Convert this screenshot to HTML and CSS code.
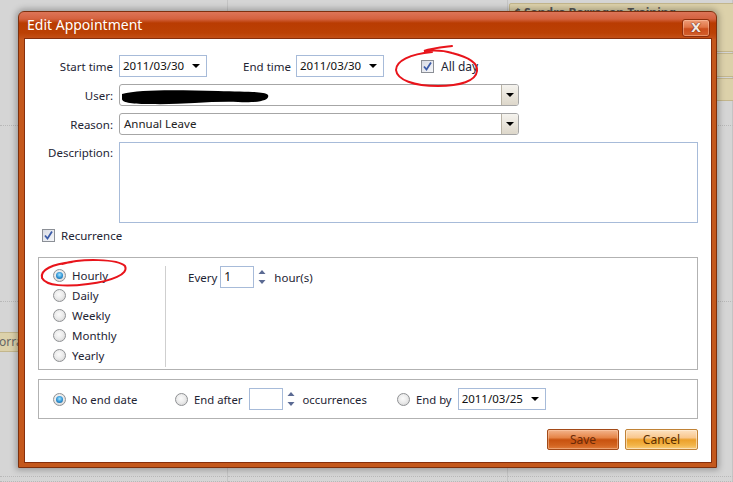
FILE: index.html
```html
<html>
<head>
    <meta charset="UTF-8">
    <title>Edit Appointment</title>
    <link rel="stylesheet" href="styles.css">
</head>
<body>
<!-- calendar behind the dialog -->
<div class="calendar">
    <div class="cell"></div><div class="cell"></div><div class="cell"></div>
    <div class="cell"></div><div class="cell"></div><div class="cell"></div>
    <div class="cell"></div><div class="cell"></div><div class="cell"></div>
    <div class="cell"></div><div class="cell"></div><div class="cell"></div>
</div>
<div class="appt appt-sandra">&#162; Sandra Barragan Training</div>
<div class="appt appt-b"></div>
<div class="appt appt-c"></div>
<div class="appt appt-left">orra</div>

<div class="dialog">
    <div class="dialog-title">
        <span class="title-text">Edit Appointment</span>
        <span class="close-btn">X</span>
    </div>
    <div class="dialog-body">
        <div class="form-grid">
            <span class="field-label">Start time</span>
            <div class="time-row">
                <div class="date-box">2011/03/30<span class="caret"></span></div>
                <span class="end-label">End time</span>
                <div class="date-box">2011/03/30<span class="caret"></span></div>
                <label class="check-label allday">
                    <span class="check"><svg width="11" height="11" viewBox="0 0 11 11"><path d="M2 5.5 L4.5 8.5 L9 1.5" fill="none" stroke="#3b5ba8" stroke-width="1.8"/></svg></span>
                    All day
                </label>
            </div>

            <span class="field-label">User:</span>
            <div class="combo">
                <div class="combo-text">
                    <svg class="scribble" width="150" height="20" viewBox="0 0 150 20"><path d="M2 8 C20 3 60 4 98 5 C125 6 144 5 148 9 C150 14 140 17 118 16 C90 15 60 19 30 18 C14 18 2 17 2 13 Z" fill="#000"/></svg>
                </div>
                <span class="combo-btn"><span class="caret"></span></span>
            </div>

            <span class="field-label">Reason:</span>
            <div class="combo">
                <div class="combo-text">Annual Leave</div>
                <span class="combo-btn"><span class="caret"></span></span>
            </div>

            <span class="field-label desc-label">Description:</span>
            <div class="textarea"></div>
        </div>

        <label class="check-label recurrence">
            <span class="check"><svg width="11" height="11" viewBox="0 0 11 11"><path d="M2 5.5 L4.5 8.5 L9 1.5" fill="none" stroke="#3b5ba8" stroke-width="1.8"/></svg></span>
            Recurrence
        </label>

        <div class="rec-box">
            <div class="rec-list">
                <label class="radio-label"><span class="radio on"></span>Hourly</label>
                <label class="radio-label"><span class="radio"></span>Daily</label>
                <label class="radio-label"><span class="radio"></span>Weekly</label>
                <label class="radio-label"><span class="radio"></span>Monthly</label>
                <label class="radio-label"><span class="radio"></span>Yearly</label>
            </div>
            <div class="rec-detail">
                <span>Every</span>
                <div class="num-box">1</div>
                <svg class="spin" width="8" height="16" viewBox="0 0 8 16"><path d="M0.5 5 L4 1 L7.5 5 Z M0.5 11 L7.5 11 L4 15 Z" fill="#5b6a93"/></svg>
                <span>hour(s)</span>
            </div>
        </div>

        <div class="end-box">
            <label class="end-opt first"><span class="radio on"></span>No end date</label>
            <label class="end-opt second">
                <span class="radio"></span>End after
                <span class="num-box"></span>
                <svg class="spin" width="8" height="16" viewBox="0 0 8 16"><path d="M0.5 5 L4 1 L7.5 5 Z M0.5 11 L7.5 11 L4 15 Z" fill="#5b6a93"/></svg>
                occurrences
            </label>
            <label class="end-opt">
                <span class="radio"></span>End by
                <div class="date-box">2011/03/25<span class="caret"></span></div>
            </label>
        </div>

        <div class="buttons">
            <button type="button" class="btn btn-save">Save</button>
            <button type="button" class="btn btn-cancel">Cancel</button>
        </div>
    </div>
</div>

<!-- pen marks drawn over the dialog -->
<svg class="marks" width="733" height="482" viewBox="0 0 733 482">
    <path d="M452 46 C444 47 432 48 424 51 C434 50 446 51 452 53 C468 57 478 63 477 71 C476 81 460 86 438 86 C414 86 397 80 396 70 C396 61 410 54 432 52" fill="none" stroke="#e8141b" stroke-width="2" stroke-linecap="round"/>
    <path d="M62 264 C82 258 118 259 125 266 C129 274 112 281 88 284 C66 287 46 286 42 278 C40 270 52 264 72 262" fill="none" stroke="#e8141b" stroke-width="2" stroke-linecap="round"/>
</svg>
</body>
</html>
```

FILE: styles.css
```css
* {
    padding: 0;
    margin: 0;
    box-sizing: border-box;
}

body {
    width: 733px;
    height: 482px;
    overflow: hidden;
    background: #d5d5d5;
    font-family: "Noto Sans", "DejaVu Sans", sans-serif;
    font-size: 11.5px;
    color: #1e2433;
}

/* calendar grid */
.calendar {
    display: grid;
    grid-template-columns: 228px 280px 1fr;
    grid-template-rows: 126px 176px 175px 1fr;
    width: 733px;
    height: 482px;
}

.calendar .cell {
    border-right: 1px solid #c4c4c4;
    border-bottom: 1px dotted #b8b8b8;
}

.appt {
    position: absolute;
    left: 509px;
    width: 240px;
    background: #dcd1aa;
    border: 1px solid #c3b68c;
    border-radius: 2px;
    color: #555;
    font-size: 12px;
    padding: 0 4px;
}

.appt-sandra {
    top: 3px;
    height: 49px;
    font-weight: bold;
    line-height: 14px;
    padding-top: 2px;
}

.appt-b {
    top: 53px;
    height: 24px;
}

.appt-c {
    top: 78px;
    height: 23px;
}

.appt-left {
    left: -6px;
    width: 30px;
    top: 332px;
    height: 20px;
    line-height: 18px;
    padding-left: 4px;
    color: #666;
}

/* dialog window */
.dialog {
    position: absolute;
    left: 18px;
    top: 11px;
    width: 699px;
    border: 1px solid #7d300e;
    border-radius: 6px 6px 0 0;
    padding: 0 4px 4px 5px;
    background: linear-gradient(to bottom, #dd7558 0, #d4623f 7px, #b93c02 11px, #bb4104 21px, #c4521a 27px, #c4581c 27px);
    box-shadow: 0 0 6px 2px rgba(0, 0, 0, 0.28);
}

.dialog-title {
    height: 26px;
    display: flex;
    align-items: center;
    justify-content: space-between;
    padding-left: 3px;
}

.title-text {
    color: #fff;
    font-size: 14px;
    margin-top: -2px;
}

.close-btn {
    width: 28px;
    height: 18px;
    margin-top: 6px;
    margin-right: 2px;
    border: 1px solid #8e2e0c;
    border-radius: 3px;
    background: linear-gradient(to bottom, #ee9d78 0, #e07446 45%, #cc4d1c 55%, #d2602c 100%);
    box-shadow: inset 0 0 0 1px rgba(255, 200, 170, 0.5);
    color: #f4e8e2;
    font-family: "DejaVu Sans", sans-serif;
    font-weight: bold;
    font-size: 13px;
    line-height: 16px;
    text-align: center;
    text-shadow: 0 0 1px #5a1a04, 0 0 1px #5a1a04;
}

.dialog-body {
    background: #fff;
    border: 1px solid #862f0c;
    padding: 16px 13px 12px 13px;
}

/* main fields */
.form-grid {
    display: grid;
    grid-template-columns: 75px 1fr;
    column-gap: 6px;
    row-gap: 7px;
    align-items: center;
}

.field-label {
    text-align: right;
}

.desc-label {
    align-self: start;
    padding-top: 3px;
}

.time-row {
    display: flex;
    align-items: center;
    height: 22px;
}

.end-label {
    width: 89px;
    text-align: right;
    padding-right: 5px;
}

.date-box {
    position: relative;
    width: 88px;
    height: 22px;
    border: 1px solid #a7bbd9;
    padding-left: 3px;
    line-height: 20px;
    color: #111;
}

.caret {
    position: absolute;
    right: 6px;
    top: 8px;
    border-left: 4px solid transparent;
    border-right: 4px solid transparent;
    border-top: 4px solid #000;
}

.check-label {
    display: flex;
    align-items: center;
    gap: 7px;
}

.allday {
    margin-left: 37px;
    font-size: 12px;
}

.check {
    width: 13px;
    height: 13px;
    border: 1px solid #8b8f96;
    background: linear-gradient(135deg, #d8dbe4, #f6f7fa);
    display: flex;
    align-items: center;
    justify-content: center;
}

.combo {
    width: 400px;
    height: 22px;
    border: 1px solid #a6a6a6;
    border-radius: 3px;
    display: flex;
}

.combo-text {
    flex: 1;
    padding-left: 4px;
    line-height: 20px;
    color: #222;
}

.scribble {
    display: block;
    margin: 1px 0 0 -4px;
}

.combo-btn {
    position: relative;
    width: 17px;
    border-left: 1px solid #b9b3a5;
    border-radius: 0 2px 2px 0;
    background: linear-gradient(to bottom, #f5f3ee, #ddd7ca);
}

.combo-btn .caret {
    right: 4px;
}

.textarea {
    height: 81px;
    border: 1px solid #a7bbd9;
}

.recurrence {
    margin-top: 5px;
    margin-left: 4px;
    height: 14px;
    gap: 6px;
}

/* recurrence pattern */
.rec-box {
    margin-top: 15px;
    height: 113px;
    border: 1px solid #b2b2b2;
    display: flex;
}

.rec-list {
    width: 127px;
    margin: 8px 0 2px;
    padding-left: 14px;
    border-right: 1px solid #cfcfcf;
}

.radio-label {
    display: flex;
    align-items: center;
    gap: 6px;
    height: 20px;
    font-size: 11.5px;
    margin-top: -1px;
    margin-bottom: 1px;
}

.radio {
    position: relative;
    flex: none;
    width: 13px;
    height: 13px;
    border: 1px solid #8f9194;
    border-radius: 50%;
    background: radial-gradient(circle at 45% 40%, #fbfbfb 0, #ececec 45%, #cfcfcf 100%);
}

.radio.on::after {
    content: "";
    position: absolute;
    left: 2px;
    top: 2px;
    width: 7px;
    height: 7px;
    border-radius: 50%;
    background: radial-gradient(circle at 50% 40%, #a6e6ff 0, #2e92d4 55%, #14507e 100%);
}

.rec-detail {
    display: flex;
    align-items: center;
    height: 22px;
    margin-top: 8px;
    padding-left: 22px;
}

.num-box {
    width: 34px;
    height: 22px;
    border: 1px solid #a7bbd9;
    margin-left: 3px;
    padding-left: 3px;
    line-height: 20px;
    font-size: 12px;
    color: #111;
}

.spin {
    margin: 0 8px 0 4px;
}

/* range of recurrence */
.end-box {
    margin-top: 9px;
    height: 40px;
    border: 1px solid #b2b2b2;
    padding-left: 14px;
    display: flex;
    align-items: center;
}

.end-opt {
    display: flex;
    align-items: center;
    gap: 6px;
    font-size: 11.3px;
}

.end-opt.first {
    width: 122px;
}

.end-opt.second {
    width: 222px;
    gap: 0;
}

.end-opt.second .radio {
    margin-right: 6px;
}

.end-opt.second .num-box {
    margin-left: 6px;
}

.end-opt .date-box {
    font-size: 11.5px;
}

/* dialog buttons */
.buttons {
    margin-top: 10px;
    display: flex;
    justify-content: flex-end;
    gap: 6px;
}

.btn {
    width: 72px;
    height: 21px;
    border-radius: 2px;
    font-family: "Noto Sans", "DejaVu Sans", sans-serif;
    font-size: 12px;
    cursor: pointer;
}

.btn-save {
    border: 1px solid #a24a18;
    color: #6a2a08;
    background: linear-gradient(to bottom, #f3b48c 0, #e68548 40%, #c8520f 52%, #d2631f 80%, #e07b3a 100%);
    box-shadow: inset 0 0 0 1px rgba(255, 210, 180, 0.45);
}

.btn-cancel {
    width: 73px;
    border: 1px solid #c08236;
    color: #5a2e00;
    background: linear-gradient(to bottom, #fde2c2 0, #f9c88e 40%, #eca02a 52%, #f2b448 80%, #f9cd7c 100%);
    box-shadow: inset 0 0 0 1px rgba(255, 240, 220, 0.6);
}

.marks {
    position: absolute;
    left: 0;
    top: 0;
    pointer-events: none;
}
```
